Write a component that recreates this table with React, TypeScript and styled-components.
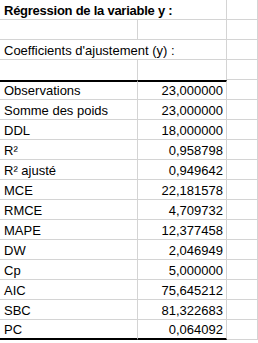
import React from "react";
import styled, { createGlobalStyle } from "styled-components";

const Global = createGlobalStyle`
  html, body { margin: 0; padding: 0; background: #ffffff; }
  body { font-family: "Liberation Sans", Arial, sans-serif; }
`;

const GRID = "#d4d4d4";

const Sheet = styled.div`
  width: 258px;
  height: 343px;
  overflow: hidden;
  background: #ffffff;
  font-family: "Liberation Sans", Arial, sans-serif;
  font-size: 13px;
  color: #000000;
`;

const Row = styled.div`
  display: grid;
  grid-template-columns: 138px 89px 1fr;
  height: 20px;
`;

type Edge = "grid" | "thick" | "none";

const Cell = styled.div<{ $span?: number; $top?: Edge; $bottom?: Edge; $align?: "left" | "right"; $bold?: boolean }>`
  box-sizing: border-box;
  height: 20px;
  grid-column: span ${(p) => p.$span ?? 1};
  border-right: 1px solid ${GRID};
  border-top: ${(p) => (p.$top === "thick" ? "2px solid #000" : "none")};
  border-bottom: ${(p) =>
    p.$bottom === "thick" ? "2px solid #000" : p.$bottom === "none" ? "none" : `1px solid ${GRID}`};
  display: flex;
  align-items: flex-end;
  justify-content: ${(p) => (p.$align === "right" ? "flex-end" : "flex-start")};
  padding: 0 3px 1px 4px;
  white-space: nowrap;
  font-weight: ${(p) => (p.$bold ? 700 : 400)};
  letter-spacing: ${(p) => (p.$bold ? "-0.25px" : "0")};
  line-height: 15px;
`;

const data: [string, string][] = [
  ["Observations", "23,000000"],
  ["Somme des poids", "23,000000"],
  ["DDL", "18,000000"],
  ["R²", "0,958798"],
  ["R² ajusté", "0,949642"],
  ["MCE", "22,181578"],
  ["RMCE", "4,709732"],
  ["MAPE", "12,377458"],
  ["DW", "2,046949"],
  ["Cp", "5,000000"],
  ["AIC", "75,645212"],
  ["SBC", "81,322683"],
  ["PC", "0,064092"],
];

export default function App() {
  return (
    <>
      <Global />
      <Sheet>
        <Row>
          <Cell $span={2} $bold>Régression de la variable y :</Cell>
          <Cell />
        </Row>
        <Row>
          <Cell />
          <Cell />
          <Cell />
        </Row>
        <Row>
          <Cell $span={2}>Coefficients d'ajustement (y) :</Cell>
          <Cell />
        </Row>
        <Row>
          <Cell $bottom="none" />
          <Cell $bottom="none" />
          <Cell />
        </Row>
        {data.map(([label, value], i) => {
          const first = i === 0;
          const last = i === data.length - 1;
          return (
            <Row key={label}>
              <Cell $top={first ? "thick" : "none"} $bottom={last ? "thick" : "grid"}>
                {label}
              </Cell>
              <Cell $align="right" $top={first ? "thick" : "none"} $bottom={last ? "thick" : "grid"}>
                {value}
              </Cell>
              <Cell />
            </Row>
          );
        })}
      </Sheet>
    </>
  );
}
